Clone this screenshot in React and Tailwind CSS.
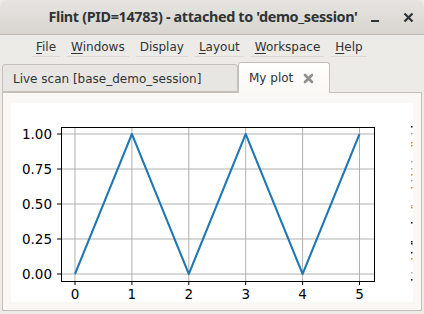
import React from 'react';

const menus = [
  { key: 'F', rest: 'ile' },
  { key: 'W', rest: 'indows' },
  { key: '', rest: 'Display' },
  { key: 'L', rest: 'ayout' },
  { key: 'W', rest: 'orkspace' },
  { key: 'H', rest: 'elp' },
];

// triangle wave sampled at 0..5
const data = [0, 1, 0, 1, 0, 1];

// axes geometry inside the plot svg
const ax = { left: 50, top: 24, right: 363, bottom: 178 };
const px = (i) => 64 + i * 56.9;
const py = (v) => 171 - v * 140;

// stray marks at the right edge of the canvas
const marks = [
  [23, '#000'], [30, '#aaa'], [39, '#d08a30'], [42, '#d08a30'], [58, '#aaa'], [65, '#aaa'],
  [71, '#d08a30'], [77, '#aaa'], [84, '#d08a30'], [102, '#aaa'], [104, '#d08a30'],
  [119, '#000'], [138, '#000'], [140, '#000'], [149, '#000'], [155, '#d08a30'], [169, '#aaa'], [176, '#000'],
];

function Plot() {
  return (
    <svg width="402" height="199" viewBox="0 0 402 199" className="block">
      <rect x="0" y="0" width="402" height="199" fill="#ffffff" />
      {/* grid */}
      {data.map((_, i) => (
        <line key={'gx' + i} x1={px(i)} y1={ax.top} x2={px(i)} y2={ax.bottom} stroke="#b0b0b0" strokeWidth="1" />
      ))}
      {[0, 0.25, 0.5, 0.75, 1].map((v) => (
        <line key={'gy' + v} x1={ax.left} y1={py(v)} x2={ax.right} y2={py(v)} stroke="#b0b0b0" strokeWidth="1" />
      ))}
      {/* line */}
      <polyline
        points={data.map((v, i) => `${px(i)},${py(v)}`).join(' ')}
        fill="none"
        stroke="#1f77b4"
        strokeWidth="2"
        strokeLinejoin="round"
      />
      {/* axes frame */}
      <rect x={ax.left + 0.5} y={ax.top + 0.5} width={ax.right - ax.left} height={ax.bottom - ax.top} fill="none" stroke="#000" strokeWidth="1" />
      {/* ticks */}
      {data.map((_, i) => (
        <line key={'tx' + i} x1={px(i)} y1={ax.bottom} x2={px(i)} y2={ax.bottom + 4} stroke="#000" strokeWidth="1" />
      ))}
      {[0, 0.25, 0.5, 0.75, 1].map((v) => (
        <line key={'ty' + v} x1={ax.left - 4} y1={py(v)} x2={ax.left} y2={py(v)} stroke="#000" strokeWidth="1" />
      ))}
      {/* tick labels */}
      {data.map((_, i) => (
        <text key={'lx' + i} x={px(i)} y="196" textAnchor="middle" fontFamily="DejaVu Sans" fontSize="13.5" fill="#000">
          {i}
        </text>
      ))}
      {[0, 0.25, 0.5, 0.75, 1].map((v) => (
        <text key={'ly' + v} x="41" y={py(v) + 5} textAnchor="end" fontFamily="DejaVu Sans" fontSize="13.5" fill="#000">
          {v.toFixed(2)}
        </text>
      ))}
      {marks.map(([y, c], i) => (
        <rect key={'m' + i} x="400" y={y} width="1.5" height="1.5" fill={c} />
      ))}
    </svg>
  );
}

export default function App() {
  return (
    <div className="w-[424px] h-[314px] bg-[#edebe8] flex flex-col overflow-hidden font-['DejaVu_Sans',sans-serif] text-[12px] text-[#2e3436]">
      {/* title bar */}
      <div className="relative h-[35px] shrink-0 rounded-t-[7px] bg-gradient-to-b from-[#e6e4e0] to-[#d8d5d0] border-b border-[#bfbab4] flex items-center justify-center pr-[18px]">
        <span className="font-['Noto_Sans',sans-serif] font-bold text-[14.4px] tracking-[-0.35px] text-[#2e3436]">
          Flint (PID=14783) - attached to 'demo_session'
        </span>
        <div className="absolute right-[10px] top-0 h-full flex items-center gap-[23px]">
          <svg width="10" height="10" viewBox="0 0 10 10" className="mt-[4px]">
            <rect x="1" y="6" width="8" height="2" fill="#2e3436" />
          </svg>
          <svg width="11" height="11" viewBox="0 0 11 11">
            <path d="M1.5 1.5 L9.5 9.5 M9.5 1.5 L1.5 9.5" stroke="#2e3436" strokeWidth="2.2" />
          </svg>
        </div>
      </div>

      {/* menu bar */}
      <div className="h-[25px] shrink-0 flex items-start pl-[32px] gap-[7px] pt-[3px]">
        {menus.map((m, i) => (
          <div key={i} className="px-[4px] h-[19px] border-b border-[#dcd8d3] leading-[18px]">
            <span className="underline underline-offset-[2px] decoration-[1px]">{m.key}</span>
            {m.rest}
          </div>
        ))}
      </div>

      {/* tabs */}
      <div className="h-[32px] shrink-0 flex items-end pl-[2px] relative z-10">
        <div className="w-[236px] h-[28px] bg-[#e8e6e3] border border-[#c4bfb9] rounded-t-[3px] flex items-center pl-[10px] pt-[1px]">
          Live scan [base_demo_session]
        </div>
        <div className="w-[92px] h-[31px] -mb-px bg-gradient-to-b from-[#ffffff] to-[#faf8f5] border border-b-0 border-[#c4bfb9] rounded-t-[3px] flex items-center pl-[10px] gap-[10px]">
          <span>My plot</span>
          <svg width="11" height="11" viewBox="0 0 11 11">
            <path d="M2 2 L9 9 M9 2 L2 9" stroke="#8f8f8c" strokeWidth="2.6" strokeLinecap="round" />
          </svg>
        </div>
      </div>

      {/* page */}
      <div className="mx-[2px] h-[219px] shrink-0 bg-[#faf8f5] border border-[#c4bfb9] pt-[10px] pl-[8px]">
        <Plot />
      </div>
    </div>
  );
}
